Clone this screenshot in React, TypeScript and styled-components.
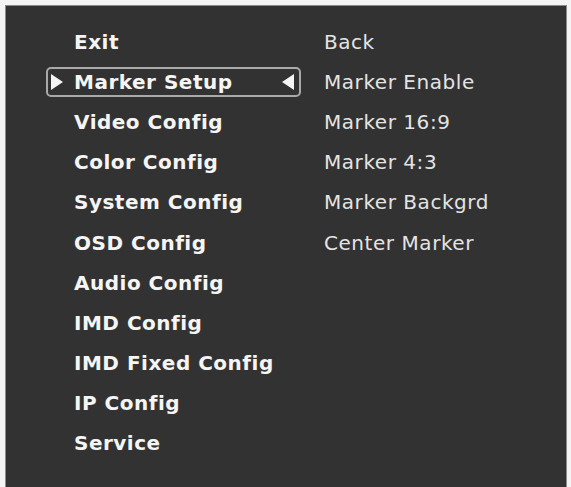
import React from "react";
import styled, { createGlobalStyle } from "styled-components";

const Global = createGlobalStyle`
  html, body { margin: 0; padding: 0; background: #ffffff; }
  body { font-family: "DejaVu Sans", Verdana, sans-serif; }
`;

const Screen = styled.div`
  width: 571px;
  height: 487px;
  box-sizing: border-box;
  padding: 5px 4px 0 5px;
  background: #f4f4f4;
  overflow: hidden;
`;

const Panel = styled.div`
  height: 100%;
  box-sizing: border-box;
  background: #323232;
  border-top: 1px solid #8a8a8a;
  border-left: 1px solid #8a8a8a;
  border-right: 1px solid #8a8a8a;
  padding: 16px 0 0 40px;
  display: flex;
  gap: 23px;
`;

const Column = styled.div<{ $width: number }>`
  width: ${(p) => p.$width}px;
  display: flex;
  flex-direction: column;
`;

const Row = styled.div`
  height: 40.1px;
  display: flex;
  align-items: center;
`;

const Box = styled.div<{ $selected?: boolean }>`
  position: relative;
  width: 100%;
  height: 30px;
  box-sizing: border-box;
  border: 2px solid ${(p) => (p.$selected ? "#a9a9a9" : "transparent")};
  border-radius: 5px;
  display: flex;
  align-items: center;
  padding-left: 26px;
`;

const MainLabel = styled.span`
  font-family: "DejaVu Sans", Verdana, sans-serif;
  font-weight: bold;
  font-size: 20px;
  color: #f5f5f5;
  white-space: nowrap;
  letter-spacing: 0.5px;
`;

const SubLabel = styled.span`
  font-family: "DejaVu Sans", Verdana, sans-serif;
  font-size: 20px;
  letter-spacing: 0.55px;
  color: #e4e4e4;
  white-space: nowrap;
`;

const Arrow = styled.svg<{ $side: "left" | "right" }>`
  position: absolute;
  top: 4px;
  ${(p) => (p.$side === "left" ? "left: 2px;" : "right: 4px;")}
  width: 14px;
  height: 18px;
`;

const mainItems = [
  "Exit",
  "Marker Setup",
  "Video Config",
  "Color Config",
  "System Config",
  "OSD Config",
  "Audio Config",
  "IMD Config",
  "IMD Fixed Config",
  "IP Config",
  "Service",
];

const subItems = [
  "Back",
  "Marker Enable",
  "Marker 16:9",
  "Marker 4:3",
  "Marker Backgrd",
  "Center Marker",
];

export default function App() {
  const selected = 1;
  return (
    <>
      <Global />
      <Screen>
        <Panel>
          <Column $width={255}>
            {mainItems.map((label, i) => (
              <Row key={label}>
                <Box $selected={i === selected}>
                  {i === selected && (
                    <Arrow $side="left" viewBox="0 0 14 18">
                      <polygon points="1,1 13,9 1,17" fill="#f5f5f5" />
                    </Arrow>
                  )}
                  <MainLabel>{label}</MainLabel>
                  {i === selected && (
                    <Arrow $side="right" viewBox="0 0 14 18">
                      <polygon points="13,1 1,9 13,17" fill="#f5f5f5" />
                    </Arrow>
                  )}
                </Box>
              </Row>
            ))}
          </Column>
          <Column $width={240}>
            {subItems.map((label) => (
              <Row key={label}>
                <SubLabel>{label}</SubLabel>
              </Row>
            ))}
          </Column>
        </Panel>
      </Screen>
    </>
  );
}
